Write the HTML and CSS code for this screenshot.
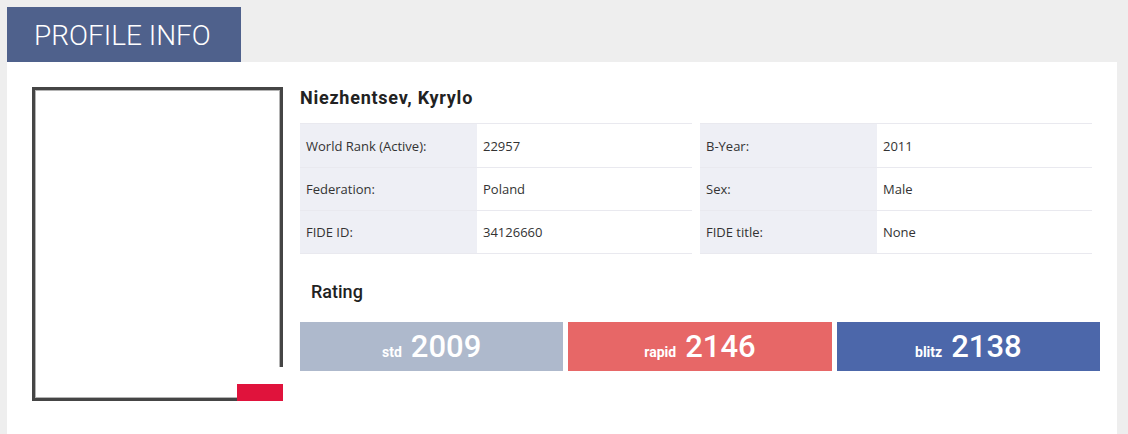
FILE: index.html
```html
<!DOCTYPE html>
<html lang="en">
<head>
    <meta charset="UTF-8">
    <meta name="viewport" content="width=device-width, initial-scale=1.0">
    <title>Profile Info</title>
    <link rel="stylesheet" href="styles.css">
</head>
<body>

<div class="page">
    <div class="tab">PROFILE INFO</div>

    <div class="card">
        <div class="photo">
            <span class="photo-flag"></span>
        </div>

        <div class="details">
            <h2 class="player-name">Niezhentsev, Kyrylo</h2>

            <div class="info-tables">
                <table class="info-table">
                    <tr><td class="label">World Rank (Active):</td><td>22957</td></tr>
                    <tr><td class="label">Federation:</td><td>Poland</td></tr>
                    <tr><td class="label">FIDE ID:</td><td>34126660</td></tr>
                </table>
                <table class="info-table">
                    <tr><td class="label">B-Year:</td><td>2011</td></tr>
                    <tr><td class="label">Sex:</td><td>Male</td></tr>
                    <tr><td class="label">FIDE title:</td><td>None</td></tr>
                </table>
            </div>

            <h3 class="rating-title">Rating</h3>

            <div class="ratings">
                <div class="rating std"><span class="kind">std</span><span class="value">2009</span></div>
                <div class="rating rapid"><span class="kind">rapid</span><span class="value">2146</span></div>
                <div class="rating blitz"><span class="kind">blitz</span><span class="value">2138</span></div>
            </div>
        </div>
    </div>
</div>

</body>
</html>
```

FILE: styles.css
```css
/* General Styles */
body {
    margin: 0;
    background-color: #eeeeee;
    font-family: Roboto, 'Liberation Sans', sans-serif;
    color: #222;
}

.page {
    padding: 7px 11px 0 7px;
}

.tab {
    display: inline-block;
    height: 55px;
    line-height: 57px;
    padding: 0 30px 0 27px;
    background-color: #4f618c;
    color: #fff;
    font-size: 28px;
    font-weight: 300;
}

.card {
    display: flex;
    gap: 17px;
    background-color: #fff;
    padding: 25px 0 40px 25px;
}

/* Player photo */
.photo {
    position: relative;
    flex: none;
    width: 245px;
    height: 308px;
    border: 3px solid #454545;
    box-shadow: inset 0 0 0 1px #b4b4b4;
}

.photo-flag {
    position: absolute;
    right: -3px;
    bottom: -3px;
    width: 46px;
    height: 34px;
    background: linear-gradient(#fff 50%, #e0133c 50%);
}

/* Details */
.details {
    width: 800px;
}

.player-name {
    margin: 0;
    font-size: 18px;
    font-weight: 700;
    letter-spacing: 0.75px;
    line-height: 22px;
}

.info-tables {
    display: flex;
    gap: 8px;
    margin-top: 14px;
    width: 792px;
}

.info-table {
    flex: 1;
    border-collapse: collapse;
    font-family: 'Open Sans', sans-serif;
    font-size: 13px;
    color: #333;
}

.info-table td {
    height: 42px;
    padding: 0 6px;
    border-top: 1px solid #e9e9ef;
    border-bottom: 1px solid #e9e9ef;
}

.info-table tr:first-child td {
    height: 43px;
}

.info-table .label {
    width: 165px;
    background-color: #eeeff5;
}

.rating-title {
    margin: 22px 0 0 11px;
    font-size: 18px;
    font-weight: 500;
    line-height: 32px;
}

/* Rating boxes */
.ratings {
    display: flex;
    gap: 5px;
    margin-top: 14px;
}

.rating {
    flex: 1;
    height: 49px;
    display: flex;
    justify-content: center;
    align-items: baseline;
    gap: 9px;
    color: #fff;
    line-height: 49px;
}

.rating .kind {
    font-size: 14px;
    font-weight: 700;
}

.rating .value {
    font-size: 31px;
    font-weight: 500;
}

.std {
    background-color: #aeb9cc;
}

.rapid {
    background-color: #e76767;
}

.blitz {
    background-color: #4c67aa;
}
```
